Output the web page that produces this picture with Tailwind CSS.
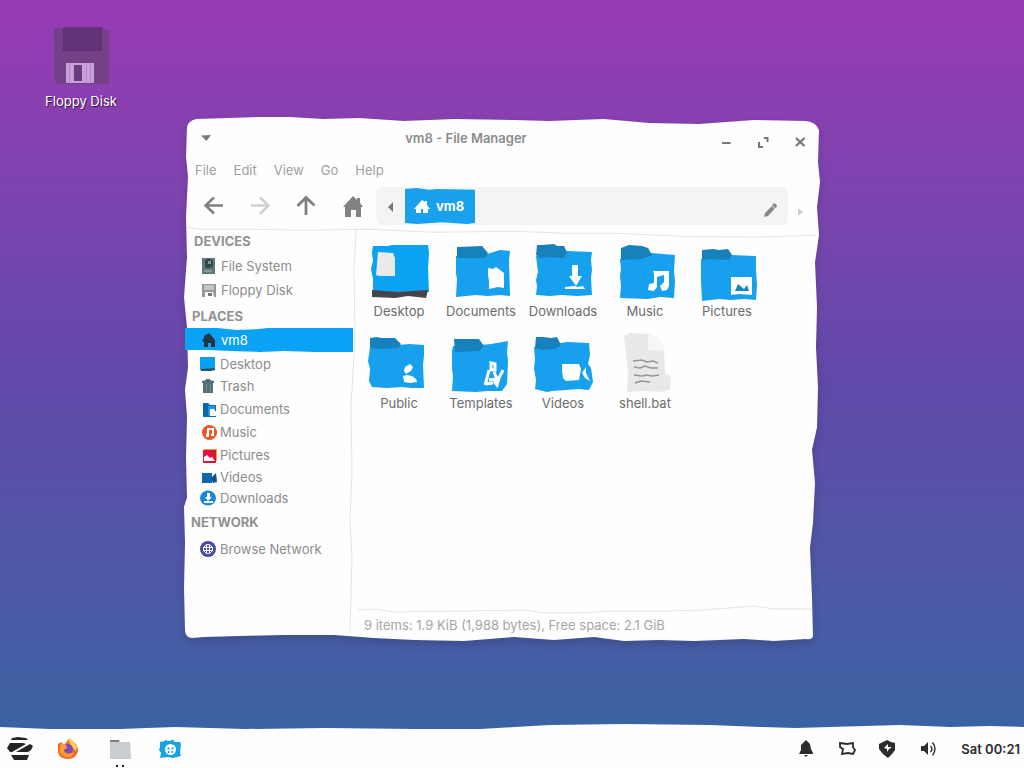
<!DOCTYPE html>
<html lang="en">
<head>
<meta charset="utf-8">
<meta name="viewport" content="width=device-width, initial-scale=1">
<title>vm8 - File Manager</title>
<script src="https://cdn.jsdelivr.net/npm/@tailwindcss/browser@4"></script>
</head>
<body class="font-['Inter','Noto_Sans',sans-serif] text-[13px] leading-4">
<div class="relative flex h-screen flex-col overflow-hidden bg-linear-to-b from-[#983ab4] via-[#6049a9] to-[#3365a2]">

<!-- Desktop -->
<main class="relative flex-1">
  <a href="#" class="absolute left-[30px] top-6 flex w-[102px] flex-col items-center text-white [text-shadow:1px_1px_1px_#2d1740]">
    <svg class="h-16 w-16" viewBox="0 0 64 64" aria-hidden="true">
      <path fill="#744186" d="M7 4h48l5 3v53H8l-3-5V7z"/>
      <path fill="#633176" d="M14 3h39v24H14z"/>
      <path fill="#c9a1d9" d="M17 39h28v20H17z"/>
      <path fill="#6b3b80" d="M25 41h8v16h-8z"/>
      <path stroke="#b48bc7" d="M20.500 39v20M37.500 39v20M41.500 39v20"/>
    </svg>
    <span class="mt-[5px]">Floppy Disk</span>
  </a>

  <!-- File manager window -->
  <section aria-label="vm8 - File Manager" class="absolute bottom-[83px] left-[184px] right-[204px] top-[117px] isolate flex flex-col text-[#8c8c8c]">
    <svg class="absolute inset-0 -z-10 h-full w-full overflow-visible drop-shadow-lg" viewBox="0 0 636 523" preserveAspectRatio="none" aria-hidden="true">
      <path fill="#fefefe" d="M3 10Q4 4 12 2L45 1L75 0L105 0L140 2L175 1L220 4L270 2L330 3L365 4L420 2L465 6L515 7L570 3L622 4Q632 5 635 13L634 45L636 65L633 90L635 118L631 145L633 190L632 230L634 270L633 310L628 332L631 365L629 405L626 430L628 480L629 518Q628 522 622 521L590 523L560 521L510 523L475 522L440 523L410 519L370 522L330 519L280 523L230 522L190 520L150 517L100 517L55 518L20 519L8 520Q1 519 1 512L0 470L1 425L0 389L3 380L2 340L3 300L1 272L4 250L3 210L0 180L3 140L2 100L4 60L2 40Z"/>
      <g fill="none" stroke="#e4e4e4">
        <path d="M3 110L15 112H70L120 113L185 112L250 115L330 114L380 116L430 116L500 119L570 120L631 118"/>
        <path d="M172 113L170 150L171 220L167 290L168 355L166 400L168 440L166 515"/>
        <path d="M174 492L190 491L210 494L280 493L340 492L360 495L390 495L430 493L480 493L520 492L570 488L590 491H628"/>
      </g>
    </svg>

    <header class="flex h-[42px] items-start justify-between pl-3.5 pr-3">
      <button aria-label="Window menu" class="flex h-[42px] w-4 items-center justify-center">
        <svg class="h-3 w-3" viewBox="0 0 12 12"><path fill="#777" d="M1 3.500l10-.5L6.500 9z"/></svg>
      </button>
      <h1 class="flex-1 text-center text-[13px] font-semibold leading-[42px] text-[#8c8c8c]">vm8 - File Manager</h1>
      <div class="flex gap-[21px] pt-[17px] text-[#777]">
        <button aria-label="Minimize" class="h-4 w-4"><svg viewBox="0 0 16 16"><path stroke="currentColor" stroke-width="2" d="M4 9h8.500"/></svg></button>
        <button aria-label="Maximize" class="h-4 w-4"><svg viewBox="0 0 16 16" fill="none" stroke="currentColor" stroke-width="2"><path d="M4 8v5h4M9 4h3.500v4"/></svg></button>
        <button aria-label="Close" class="h-4 w-4"><svg viewBox="0 0 16 16"><path stroke="currentColor" stroke-width="2.200" d="M4 4l8.500 8M12.500 4L4 12"/></svg></button>
      </div>
    </header>

    <nav aria-label="Menu" class="flex h-[22px] gap-[17px] pl-[11px] leading-5 text-[#a0a0a0]">
      <button>File</button><button>Edit</button><button>View</button><button>Go</button><button>Help</button>
    </nav>

    <div class="flex h-[50px] items-center pl-[18px] pr-3">
      <div class="flex gap-[22px] text-[#808080]">
        <button aria-label="Back" class="h-6 w-6"><svg viewBox="0 0 24 24" fill="none" stroke="currentColor" stroke-width="2.500"><path d="M3.500 11.500H21M12 3.500l-8.500 8 8.500 8"/></svg></button>
        <button aria-label="Forward" class="h-6 w-6 text-[#cfcfcf]"><svg viewBox="0 0 24 24" fill="none" stroke="currentColor" stroke-width="2.500"><path d="M3 11.500h17M12 3.500l8.500 8-8.500 8.500"/></svg></button>
        <button aria-label="Up" class="h-6 w-6"><svg viewBox="0 0 24 24" fill="none" stroke="currentColor" stroke-width="2.800"><path d="M12 21V3.500M3.500 12L12 3.500l8.500 8"/></svg></button>
        <button aria-label="Home" class="h-6 w-6"><svg viewBox="0 0 24 24"><path fill="#828282" d="M13 2l4 4V4h3v5l3 4h-2v10h-5v-7h-5v7H5V13H3z"/></svg></button>
      </div>
      <div class="ml-3 flex h-[38px] flex-1 items-center rounded-md bg-[#f4f4f4]">
        <button aria-label="Scroll left" class="flex h-full w-[29px] items-center justify-center"><svg class="h-3 w-3" viewBox="0 0 12 12"><path fill="#777" d="M8 2v10L3 7z"/></svg></button>
        <button class="relative isolate flex h-full w-[70px] items-center gap-1.5 pl-[9px] font-bold text-white">
          <svg class="absolute inset-0 -z-10 h-full w-full" viewBox="0 0 70 40" preserveAspectRatio="none" aria-hidden="true"><path fill="#1aa1ee" d="M0 2L12 1l12 2 8-1 38 1v35l-8 1-25-2-25 2L0 38z"/></svg>
          <svg class="h-4 w-4" viewBox="0 0 16 16" aria-hidden="true"><path fill="#fff" d="M8 2l3 2V3h2v4l3 4h-2v4H9v-4H7v4H2v-4H0z"/></svg>
          vm8
        </button>
        <button aria-label="Edit location" class="ml-auto mr-2.5 mt-2 h-4 w-4"><svg viewBox="0 0 16 16"><path fill="#888" d="M2 15l1-4 7-7 2.500 3L6 14zM10 3l2-2 1 1 1-.5 1 3-2 2z"/></svg></button>
      </div>
      <button aria-label="Scroll right" class="ml-1 mt-3 h-4 w-4"><svg viewBox="0 0 16 16"><path fill="#ccc" d="M6 4l5 4-5 4z"/></svg></button>
    </div>

    <div class="flex min-h-0 flex-1">
      <nav aria-label="Places" class="w-[169px] shrink-0">
        <h2 class="pl-2.5 font-bold leading-5 text-[#929292]">DEVICES</h2>
        <ul class="pt-px">
          <li><a href="#" class="flex h-6 items-center gap-1 pl-[17px] pt-1"><svg class="h-4 w-4" viewBox="0 0 16 16"><path fill="#61777f" d="M1 0h13v16H1z"/><path fill="#31464f" d="M4 3l2-2h3l3 2v5l-3 2H5L4 8z"/><path fill="#8799a0" d="M7 3h3v3H7zM3 12h8v2H3z"/></svg>File System</a></li>
          <li><a href="#" class="flex h-6 items-center gap-1 pl-[17px] pt-1"><svg class="h-4 w-4" viewBox="0 0 16 16"><path fill="#979797" d="M1 2h14v13H1z"/><path fill="#c4c4c4" d="M3 3h10v5H3z"/><path fill="#fefefe" d="M4 10h8l1 5H4z"/><path fill="#777" d="M7 11h4v3H7z"/></svg>Floppy Disk</a></li>
        </ul>
        <h2 class="pl-2 pt-1 font-bold leading-6 text-[#929292]">PLACES</h2>
        <ul>
          <li><a href="#" aria-current="page" class="relative isolate flex h-6 items-center gap-1 pl-[17px] text-white">
            <svg class="absolute inset-0 -z-10 h-full w-full" viewBox="0 0 169 24" preserveAspectRatio="none" aria-hidden="true"><path fill="#0aa2f4" d="M1 0h32l20 2 22-1 17-2 30-1 48 2v24h-38l-32-1-24 1-30-1-20-1H1z"/></svg>
            <svg class="h-4 w-4" viewBox="0 0 16 16"><path fill="#223642" d="M8 1l6 7v7h-4v-4H7v4H3v-5L1 9l2-3V4z"/></svg>vm8</a></li>
          <li><a href="#" class="flex h-[23px] items-center gap-1 pl-4"><svg class="h-4 w-4" viewBox="0 0 16 16"><path fill="#0aa0f2" d="M0 1h15v13H0z"/><path fill="#24536e" d="M1 13l13-1 1 2-4 1H1z"/></svg>Desktop</a></li>
          <li><a href="#" class="flex h-[22px] items-center gap-1 pl-4"><svg class="h-4 w-4" viewBox="0 0 16 16"><path fill="#54717a" d="M2 3l4-1V1h4v1l4 1v2h-1v10H3V5H2z"/><path stroke="#7a9299" d="M6.500 6v7M10.500 6v7"/></svg>Trash</a></li>
          <li><a href="#" class="flex h-[23px] items-center gap-1 pl-4"><svg class="h-4 w-4" viewBox="0 0 16 16"><path fill="#0c6fbe" d="M3 2h5l2 2h6v12H3z"/><path fill="#2393df" d="M3 5h12v10H3z"/><path fill="#0767ae" d="M3 3h5v12H3z"/><path fill="#fff" d="M10 8h4l2 3v4h-6z"/></svg>Documents</a></li>
          <li><a href="#" class="flex h-[23px] items-center gap-1 pl-4"><svg class="h-4 w-4 overflow-visible" viewBox="0 0 16 16"><circle cx="9.500" cy="8.500" r="7.500" fill="#ef5729"/><path fill="#fff" d="M7 4h7v8h-3v-2h1V6H9v7H6v-3h1z"/></svg>Music</a></li>
          <li><a href="#" class="flex h-[23px] items-center gap-1 pl-4"><svg class="h-4 w-4 overflow-visible" viewBox="0 0 16 16"><path fill="#ff9d22" d="M4 2h13v12H4z"/><path fill="#dc123f" d="M3 3h13v13H3z"/><path fill="#fff" d="M4 14v-4l3-2 3 3 2-1 3 4z"/></svg>Pictures</a></li>
          <li><a href="#" class="flex h-[22px] items-center gap-1 pl-4"><svg class="h-4 w-4 overflow-visible" viewBox="0 0 16 16"><path fill="#0c67ae" d="M2 4h10v10H2z"/><path fill="#07548e" d="M11 9l5-5 1 9-4 1z"/></svg>Videos</a></li>
          <li><a href="#" class="flex h-5 items-center gap-1 pl-4"><svg class="h-4 w-4" viewBox="0 0 16 16"><ellipse cx="8" cy="8" rx="8" ry="7.500" fill="#1687d9"/><path fill="#fff" d="M7 3h3v4h2l-4 4-3-4h2zM4 11h9v2H4z"/></svg>Downloads</a></li>
        </ul>
        <h2 class="pl-[7px] font-bold leading-7 text-[#929292]">NETWORK</h2>
        <ul>
          <li><a href="#" class="flex h-[26px] items-center gap-1 pl-4"><svg class="h-4 w-4" viewBox="0 0 16 16"><circle cx="8" cy="8" r="8" fill="#464a9f"/><g fill="none" stroke="#fff"><circle cx="8" cy="8" r="4.500"/><path d="M3 6.500h10M3 9.500h10M6.500 4v8M9.500 4v8"/></g></svg>Browse Network</a></li>
        </ul>
      </nav>

      <div class="flex min-w-0 flex-1 flex-col">
        <ul class="grid flex-1 grid-cols-[repeat(auto-fill,82px)] content-start gap-y-3 overflow-hidden pl-[5px] pt-2 text-[#6c6c6c]">
          <li><a href="#" class="flex flex-col items-center"><svg class="h-16 w-16" viewBox="0 0 64 64"><path fill="#0aa3f4" d="M6 7l15 0 4-1h36l1 8-1 15 1 24-56 1V40L4 30l2-8-1-8z"/><path fill="#47434b" d="M5 51l26 2 14-1 16-1-2 8-18-2-13 2-23-1z"/><path fill="#eaeaea" d="M11 13l15 1 2 5v18H13l-4-1z"/></svg>Desktop</a></li>
          <li><a href="#" class="flex flex-col items-center"><svg class="h-16 w-16" viewBox="0 0 64 64"><path fill="#16a0ee" d="M7 17l31-2 13-4 10 1-1 9 1 36-10-1-12 1-12-1-20 2 1-18-1-6z"/><path fill="#1781bd" d="M8 8l25-1 6 7-3 5H8z"/><path fill="#fff" d="M39 29l5 1 3-2 4 3 4 3v15l-6-1-9 2v-8l-1-6z"/></svg>Documents</a></li>
          <li><a href="#" class="flex flex-col items-center"><svg class="h-16 w-16" viewBox="0 0 64 64"><path fill="#16a0ee" d="M5 17l31-5 25 1-1 8 1 10-1 8 1 17-15 1-16-1-11 1-14-1 1-9-1-6 2-8z"/><path fill="#1781bd" d="M6 6l5 0 12-1 3 2h7l3 6-3 6-17-1-7 1-4-3z"/><path fill="#fff" d="M41 26h6v11h4l-6 10-7-10h3zM34 48l9-1 4 1 5-1 2 3H34z"/></svg>Downloads</a></li>
          <li><a href="#" class="flex flex-col items-center"><svg class="h-16 w-16" viewBox="0 0 64 64"><path fill="#16a0ee" d="M7 20l31-6 24 2-1 16 1 10-1 17-14-1-12 2-28-1 1-12-1-10 1-7z"/><path fill="#1781bd" d="M8 9l8-3 13 1 6 2 4 7-10 4-21 1z"/><path fill="#fff" d="M40 32h16v15l-2 4-5 1-2-5 4-4v-7l-7 2v10l-3 4-6-1 1-6 5-1V35z"/></svg>Music</a></li>
          <li><a href="#" class="flex flex-col items-center"><svg class="h-16 w-16" viewBox="0 0 64 64"><path fill="#16a0ee" d="M6 20l30-4 25 1v14l1 15-1 15-12-1-14 1-11-1-17 2-1-20z"/><path fill="#1781bd" d="M7 11l11-1 6 1 9-1 4 6-3 5-18-1-9 1z"/><path fill="#fff" d="M36 38h21v18l-13-1-8 1z"/><path fill="#1586c5" d="M40 52l3-7 6 5 3-4 2 6z"/></svg>Pictures</a></li>
          <li><a href="#" class="flex flex-col items-center"><svg class="h-16 w-16" viewBox="0 0 64 64"><path fill="#16a0ee" d="M3 17l29-3 10-1 15 1v10l-1 10 1 23-13 0-9-1-15 1-15-1-3-6 1-12-2-8z"/><path fill="#1781bd" d="M3 7l7-1 4 1 14 0 6 6-3 4-16 1-12-1z"/><path fill="#fff" d="M38 36l5-3 3 3-2 4-5 3-2-3zM36 45l4-1 5 1 4 3 1 3-7 1-6-1z"/></svg>Public</a></li>
          <li><a href="#" class="flex flex-col items-center"><svg class="h-16 w-16" viewBox="0 0 64 64"><path fill="#16a0ee" d="M3 20l1-5 27-1 11-1 17-3-1 12 1 8-1 23-5 7-14 0-12 1-24-1 1-15-1-8z"/><path fill="#1781bd" d="M5 8l25 0 5 7-5 5-24 1z"/><path fill="none" stroke="#fff" stroke-width="3" d="M42 32v7h4v-6zM40 39l-2 8-2 7M45 41l3 7-8 1M37 53l7-1M54 39l-4 8-2 7-3-4"/></svg>Templates</a></li>
          <li><a href="#" class="flex flex-col items-center"><svg class="h-16 w-16" viewBox="0 0 64 64"><path fill="#16a0ee" d="M3 16l33-5 22 1 1 12-2 9 3 4 2 14-4 8-11-1-12 1-14 1-5 1-12-3 1-9-2-12 1-9z"/><path fill="#1781bd" d="M5 6l7 0 8 1 6-1 4 8-6 4-13 1-7-2z"/><path fill="#fff" d="M31 33h17l2 5-2 11-13 1-3-3-1-7zM51 42l4-6v6l4 8-5-3z"/></svg>Videos</a></li>
          <li><a href="#" class="flex flex-col items-center"><svg class="h-16 w-16" viewBox="0 0 64 64"><path fill="#e8e8e8" d="M11 5l6-3 20 1 7 4 7 11 1 25 6 2-1 14-10 2-14-1-19 1 1-20z"/><path fill="#f6f6f6" d="M35 3l5 1 6 3 7 13-18-1z"/><path fill="none" stroke="#969696" stroke-width="1.500" d="M20 30l9-1 5 2 6-1 5 2M21 36l6 1 5-2 6 2h7M21 44l8 1 5-1 5 1 7-1M22 52l6-2 9 1"/></svg>shell.bat</a></li>
        </ul>
        <footer class="pb-0.5 pl-[11px] leading-7 text-[#a6a6a6]">9 items: 1.9 KiB (1,988 bytes), Free space: 2.1 GiB</footer>
      </div>
    </div>
  </section>
</main>

<!-- Taskbar -->
<footer class="relative isolate flex h-11 shrink-0 items-center justify-between pt-1.5">
  <svg class="absolute inset-0 -z-10 h-full w-full" viewBox="0 0 1024 44" preserveAspectRatio="none" aria-hidden="true"><path fill="#fefefe" d="M0 3l50 2h70l55-2 70 2 80-1 90 1 65 0 35-2 35-2 75-1 85 1 50 2 35 1 35-1 70-2 50 2 40-1 34 1v41H0z"/></svg>
  <nav aria-label="Applications" class="flex items-center gap-6 pl-1.5">
    <button aria-label="Zorin menu" class="h-7 w-7"><svg viewBox="0 0 28 28" fill="#252525"><path d="M6 3l6-1 8 1 2 2H5zM4 8l13 0 3 1L6 17l-2 0-3-4zM24 9l3 2-2 4-3 2H10zM5 20h18l-2 5H8z"/></svg></button>
    <button aria-label="Firefox" class="-ml-0.5 h-6 w-6"><svg viewBox="0 0 24 24"><path fill="#f7672c" d="M2 7l3-2 3 3 5-6 2 1 5 4 2 5c0 6-4 10-10 10S2 19 2 14z"/><path fill="#ffd34a" d="M14 1l4 4 3 5-1 4-5-5-2-5z"/><circle cx="12" cy="12" r="5" fill="#7e4bbb"/><path fill="#ff9d2e" d="M5 6l5 2 1 3-3 2c0 4 6 5 10 2-1 4-4 6-7 5-5 0-8-5-7-9z"/></svg></button>
    <button aria-label="Files" class="relative ml-1 h-6 w-6"><svg viewBox="0 0 24 24"><path fill="#7a7f82" d="M2 3h9l1 3H2z"/><path fill="#c8cdcf" d="M2 5h20l1 17H2z"/></svg><span class="absolute -bottom-1.5 left-2 flex gap-1"><i class="h-0.5 w-0.5 bg-[#222]"></i><i class="h-0.5 w-0.5 bg-[#222]"></i></span></button>
    <button aria-label="Software" class="ml-0.5 h-6 w-6"><svg viewBox="0 0 24 24"><path fill="#16a3e1" d="M2 5l5-1V3h2v1h4V3h3v2h6l1 2-1 9 1 3-8 2-5-1-8 1 1-5-2-3 1-3z"/><circle cx="12.500" cy="12.500" r="5.500" fill="#fff"/><path stroke="#16a3e1" stroke-width="2" d="M9.500 11.500h2M13.500 11.500h2M10 15h1.500M13.500 15H15"/></svg></button>
  </nav>
  <div class="flex items-center pr-1 text-[#2c2c2c]">
    <button aria-label="Notifications" class="mr-[21px] h-5 w-5"><svg viewBox="0 0 20 20" fill="currentColor"><path d="M8 3l2-2 2 2 2 2 1 5 2 4v1H3l2-4V6zM8 16h4l-2 2z"/></svg></button>
    <button aria-label="Display" class="mr-5 h-5 w-5"><svg viewBox="0 0 20 20"><path fill="none" stroke="currentColor" stroke-width="1.800" d="M3 4l7 1 6-1 0 4 2 3-2 4-5-1-6 1 1-5-3-2z"/></svg></button>
    <button aria-label="Security" class="mr-[21px] h-5 w-5"><svg viewBox="0 0 20 20"><path fill="currentColor" d="M10 1l4 2 4 1v7l-3 4-4 4-5-4-4-5V5l4-2z"/><path fill="#fff" d="M11 5v3h4l-3 2-2 3v-3l-3-1z"/></svg></button>
    <button aria-label="Volume" class="mr-[23px] h-5 w-5"><svg viewBox="0 0 20 20"><path fill="currentColor" d="M3 7h3l4-4v13l-4-4H3z"/><path fill="none" stroke="currentColor" stroke-width="1.400" d="M12.500 7q3 3 0 6M14.500 3.500q5 6 0 13"/></svg></button>
    <time class="text-[13px] font-semibold">Sat 00:21</time>
  </div>
</footer>
</div>
</body>
</html>
